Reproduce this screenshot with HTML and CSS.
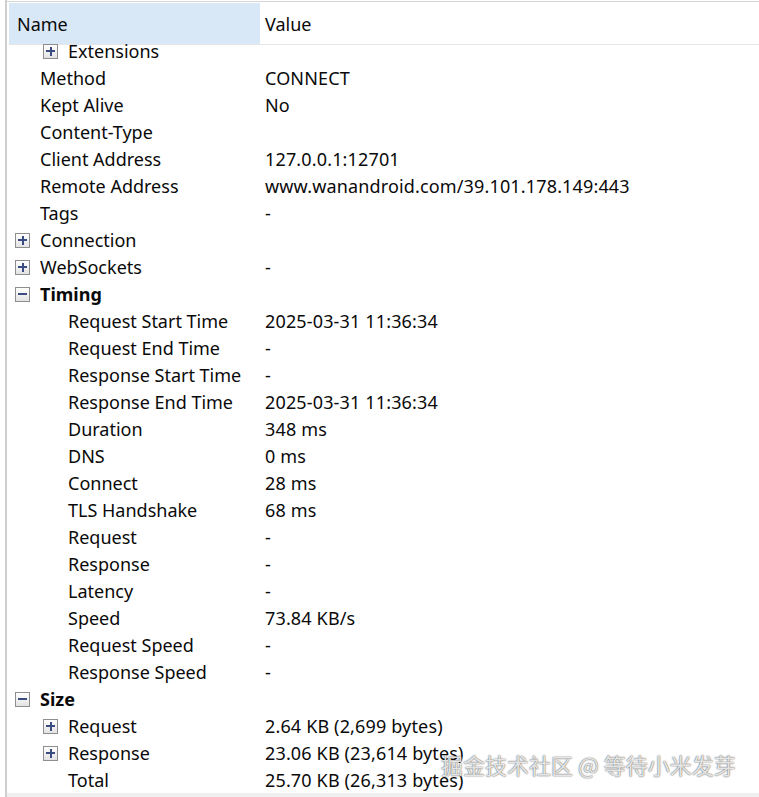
FILE: index.html
```html
<!DOCTYPE html>
<html>
<head>
<meta charset="utf-8">
<link rel="stylesheet" href="styles.css">
</head>
<body>
<div class="frame">
  <div class="topline"></div>
  <div class="grid">
    <div class="header">
      <div class="h-name">Name</div>
      <div class="h-value">Value</div>
    </div>
    <div class="viewport">
      <div class="rows">
        <div class="row partial"><div class="name l1"><span class="tg plus"></span>Extensions</div><div class="val"></div></div>
        <div class="row"><div class="name l0">Method</div><div class="val">CONNECT</div></div>
        <div class="row"><div class="name l0">Kept Alive</div><div class="val">No</div></div>
        <div class="row"><div class="name l0">Content-Type</div><div class="val"></div></div>
        <div class="row"><div class="name l0">Client Address</div><div class="val">127.0.0.1:12701</div></div>
        <div class="row"><div class="name l0">Remote Address</div><div class="val">www.wanandroid.com/39.101.178.149:443</div></div>
        <div class="row"><div class="name l0">Tags</div><div class="val">-</div></div>
        <div class="row"><div class="name t0"><span class="tg plus"></span>Connection</div><div class="val"></div></div>
        <div class="row"><div class="name t0"><span class="tg plus"></span>WebSockets</div><div class="val">-</div></div>
        <div class="row"><div class="name t0 bold"><span class="tg minus"></span>Timing</div><div class="val"></div></div>
        <div class="row"><div class="name l1">Request Start Time</div><div class="val">2025-03-31 11:36:34</div></div>
        <div class="row"><div class="name l1">Request End Time</div><div class="val">-</div></div>
        <div class="row"><div class="name l1">Response Start Time</div><div class="val">-</div></div>
        <div class="row"><div class="name l1">Response End Time</div><div class="val">2025-03-31 11:36:34</div></div>
        <div class="row"><div class="name l1">Duration</div><div class="val">348 ms</div></div>
        <div class="row"><div class="name l1">DNS</div><div class="val">0 ms</div></div>
        <div class="row"><div class="name l1">Connect</div><div class="val">28 ms</div></div>
        <div class="row"><div class="name l1">TLS Handshake</div><div class="val">68 ms</div></div>
        <div class="row"><div class="name l1">Request</div><div class="val">-</div></div>
        <div class="row"><div class="name l1">Response</div><div class="val">-</div></div>
        <div class="row"><div class="name l1">Latency</div><div class="val">-</div></div>
        <div class="row"><div class="name l1">Speed</div><div class="val">73.84 KB/s</div></div>
        <div class="row"><div class="name l1">Request Speed</div><div class="val">-</div></div>
        <div class="row"><div class="name l1">Response Speed</div><div class="val">-</div></div>
        <div class="row"><div class="name t0 bold"><span class="tg minus"></span>Size</div><div class="val"></div></div>
        <div class="row"><div class="name l1"><span class="tg plus"></span>Request</div><div class="val">2.64 KB (2,699 bytes)</div></div>
        <div class="row"><div class="name l1"><span class="tg plus"></span>Response</div><div class="val">23.06 KB (23,614 bytes)</div></div>
        <div class="row"><div class="name l1">Total</div><div class="val">25.70 KB (26,313 bytes)</div></div>
      </div>
    </div>
  </div>
  <div class="bottombar"></div>
  <div class="watermark">掘金技术社区 @ 等待小米发芽</div>
</div>
</body>
</html>
```

FILE: styles.css
```css
html, body {
  margin: 0;
  padding: 0;
  background: #ffffff;
}
body {
  font-family: "Noto Sans", "Open Sans", sans-serif;
  font-size: 18px;
  color: #0a0a0a;
}
.frame {
  position: relative;
  width: 759px;
  height: 797px;
  overflow: hidden;
  box-sizing: border-box;
  border-left: 2px solid #cfcfcf;
  margin-left: 5px;
  display: flex;
  flex-direction: column;
}
.topline {
  height: 1px;
  background: #d6d6d6;
  margin-top: 1px;
  flex: none;
}
.grid {
  flex: 1;
  display: flex;
  flex-direction: column;
  min-height: 0;
  padding-left: 2px;
}
.header {
  display: flex;
  height: 41px;
  margin-top: 1px;
  border-bottom: 1px solid #e6e6e6;
  flex: none;
}
.h-name {
  width: 251px;
  background: #d9e8f7;
  display: flex;
  align-items: center;
  padding-left: 8px;
  box-sizing: border-box;
}
.h-value {
  flex: 1;
  display: flex;
  align-items: center;
  padding-left: 5px;
}
.viewport {
  flex: 1;
  min-height: 0;
}
.rows {
  display: flex;
  flex-direction: column;
}
.row {
  display: flex;
  height: 27px;
  align-items: center;
  flex: none;
}
.row.partial {
  height: 19.5px;
  align-items: flex-start;
}
.partial .name, .partial .val {
  line-height: 12px;
  height: 12px;
}
.name {
  width: 251px;
  display: flex;
  align-items: center;
  white-space: nowrap;
  box-sizing: border-box;
}
.val {
  flex: 1;
  padding-left: 5px;
  white-space: nowrap;
  letter-spacing: 0.15px;
}
.l0 { padding-left: 31px; }
.t0 { padding-left: 6px; }
.l1 { padding-left: 59px; }
.l1 .tg { margin-left: -25px; }
.bold { font-weight: 700; }
.tg {
  position: relative;
  width: 15px;
  height: 15px;
  box-sizing: border-box;
  border: 1px solid #8e8e8e;
  background: linear-gradient(#ffffff, #e3e3e3);
  margin-right: 10px;
  flex: none;
}
.tg::before {
  content: "";
  position: absolute;
  left: 2px;
  top: 5.5px;
  width: 9px;
  height: 2px;
  background: #3a4c82;
}
.plus::after {
  content: "";
  position: absolute;
  left: 5.5px;
  top: 2px;
  width: 2px;
  height: 9px;
  background: #3a4c82;
}
.bottombar {
  height: 4px;
  background: #efefef;
  flex: none;
}
.watermark {
  position: absolute;
  left: 434px;
  top: 748px;
  font-family: "Noto Sans CJK SC", sans-serif;
  font-size: 22px;
  color: rgba(255, 255, 255, 0.85);
  text-shadow: 0 0 1px rgba(0,0,0,0.6), 0 0 2px rgba(0,0,0,0.4);
  white-space: nowrap;
}
```
